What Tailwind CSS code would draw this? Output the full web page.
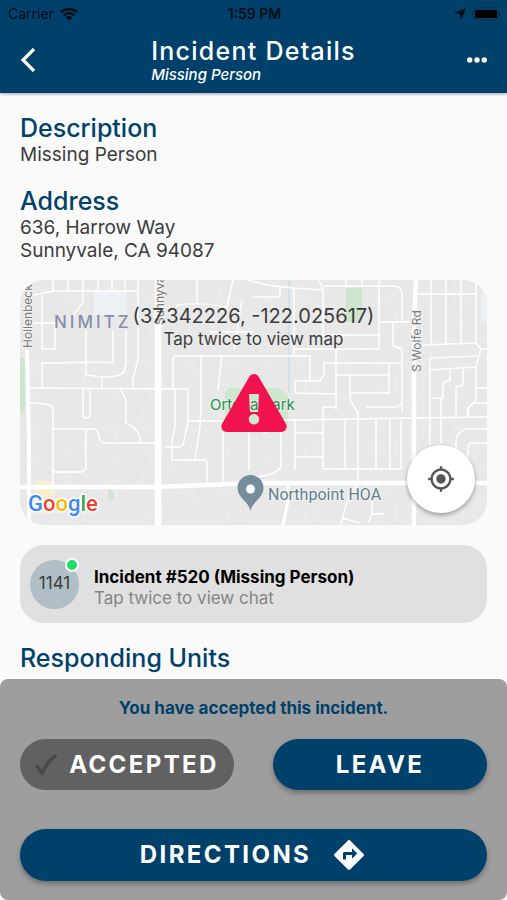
<!DOCTYPE html>
<html lang="en">

<head>
    <meta charset="UTF-8">
    <meta name="viewport" content="width=device-width, initial-scale=1.0">
    <title>Incident Details</title>
    <script src="https://cdn.jsdelivr.net/npm/@tailwindcss/browser@4"></script>
</head>

<body class="flex h-screen flex-col bg-[#fafafa] font-['Inter',sans-serif] text-[#3c3c3c]">
    <header class="z-10 shrink-0 bg-[#00416b] pb-2.5 text-white shadow-[0_1px_3px_rgba(0,0,0,0.35)]">
        <!-- Status bar -->
        <div class="grid h-7 grid-cols-3 items-center pr-1.5 pl-2 text-sm text-[#020d16]">
            <div class="flex items-center gap-1.5">
                <span>Carrier</span>
                <svg class="h-3.5 w-[18px]" viewBox="0 0 18 14" fill="none" stroke="currentColor" stroke-width="2.4">
                    <path d="M1 5.2a11.5 11.5 0 0 1 16 0M3.8 8.4a7.5 7.5 0 0 1 10.4 0" />
                    <path d="M9 13.6L5.8 10.4a4.6 4.6 0 0 1 6.4 0z" fill="currentColor" stroke="none" />
                </svg>
            </div>
            <span class="text-center font-semibold">1:59 PM</span>
            <div class="flex items-center justify-end gap-1.5">
                <svg class="h-3 w-3" viewBox="0 0 12 12" fill="currentColor">
                    <path d="M12 0L7 12 6 6.2 0 5z" />
                </svg>
                <svg class="h-3.5 w-[29px]" viewBox="0 0 29 14">
                    <rect x="1" y="1" width="25" height="12" rx="3" fill="none" stroke="#04304f" />
                    <rect x="3" y="3" width="22" height="8" rx="1" fill="#000" />
                    <path d="M27.5 5v4" stroke="#04304f" stroke-width="1.5" />
                </svg>
            </div>
        </div>

        <div class="grid grid-cols-[1fr_auto_1fr] items-center px-5 pt-2">
            <button aria-label="Back" class="justify-self-start">
                <svg class="h-6 w-4" viewBox="0 0 16 24" fill="none" stroke="currentColor" stroke-width="3.2">
                    <path d="M14 1L3 12l11 11" />
                </svg>
            </button>
            <div>
                <h1 class="text-[25px] leading-[30px] font-medium tracking-wider">Incident Details</h1>
                <p class="text-[15px] leading-[17px] font-medium italic">Missing Person</p>
            </div>
            <button aria-label="More options" class="justify-self-end">
                <svg class="h-6 w-5" viewBox="0 0 20 24" fill="currentColor">
                    <circle cx="2.7" cy="12" r="2.7" />
                    <circle cx="10" cy="12" r="2.7" />
                    <circle cx="17.3" cy="12" r="2.7" />
                </svg>
            </button>
        </div>
    </header>

    <main class="min-h-0 flex-1 overflow-hidden px-5 pt-5">
        <section>
            <h2 class="text-[25px] leading-[30px] font-medium text-[#00416b]">Description</h2>
            <p class="text-[19px] leading-[23px]">Missing Person</p>
        </section>

        <section class="mt-5">
            <h2 class="text-[25px] leading-[30px] font-medium text-[#00416b]">Address</h2>
            <p class="text-[19px] leading-[23px]">636, Harrow Way<br>Sunnyvale, CA 94087</p>
        </section>

        <section class="relative mt-[18px] h-[245px] overflow-hidden rounded-[24px] bg-[#e8e8e8]">
            <svg class="h-full w-full" viewBox="0 0 467 245" preserveAspectRatio="xMidYMid slice" fill="none">
                <defs>
                    <pattern id="parcels" width="78" height="64" patternUnits="userSpaceOnUse">
                        <path d="M6 8h18M6 20h12v14M44 4v16h20M30 40h22v12M8 54h14M64 30v20M70 58h8" stroke="#ededed" />
                    </pattern>
                </defs>
                <rect width="467" height="245" fill="url(#parcels)" />

                <!-- Parks, school and canal -->
                <path d="M74 12h33v23H74z" fill="#edf0f4" />
                <path d="M0 78h5v55H0zM326 8h16v34h-16zM205 112l4-4h50l9 8v32h-63zM88 208l6 4v8h-6z" fill="#cde6cd" />
                <path d="M15 201h20v30l-12 4-8-10z" fill="#f9efce" />
                <path d="M461 12h6v29h-6z" fill="#eef1f4" />
                <path d="M269 0v112" stroke="#c9dfee" stroke-width="1.5" />

                <!-- Side streets -->
                <g stroke="#fff" stroke-width="1.5" stroke-linejoin="round">
                    <path d="M9 15h5l19-4h85M33 0v11M48 0v11M63 0v22L52 37M78 0v11M92 0v11M105 0v11M118 0v80l-5 18v10" />
                    <path d="M22 15v54h13V43H8M66 50v45l16 2q18 0 22-5l2-8V50M93 50v32L22 83v25M82 97v11M8 108l160 1" />
                    <path d="M63 108v27q0 3 3 3t4-3v-27M100 108l6 12v23q14 6 15 20M10 123q20 0 23 5v77M33 149h40q5 0 6 7t6 7h52M66 149v40l-4 3H33" />
                    <path d="M153 109V78l2-2h136M155 109v38l-3 13v20h33l2 2v21M145 167h15l3-2 5-23v-33M168 141h35M181 76v50l-1 21-5 33" />
                    <path d="M177 0v25M150 33l8-8q20-3 49 2l6-27M222 20l-8 50M190 52h43M202 76l-4 34M203 152v51M229 152v38" />
                    <path d="M227 0l20 5 26 3 30 2v45h56M274 8v68M233 17h27V5M299 0l4 10M303 6h70q9 0 9 9v27M326 0v6M342 0v6M359 0v69h-84M359 42h36" />
                    <path d="M373 42v24l9 3v63M290 76v25h10l4-6V83h78M316 69v61M316 95h53v18h-39M369 83v12M330 95v25l8 13v70M275 101h15M275 101v12l41 1" />
                    <path d="M396 14h60M411 0v63M426 0v63M441 0v63M456 0v63M403 65l53-2 5 6-5 18-46 3V78l48-2M461 69h6M456 87v33l-8 8v9M456 108h11" />
                    <path d="M410 90v75M430 90v10l-7 3v15h-10M443 89v16l-7 2v30M421 118v45M448 137v-8l5-6h14M467 149h-21q-9 3-10 11v12M467 163h-17l-2 4v38" />
                    <path d="M255 140h20l118-2 74-1M275 140v49M303 140v49M325 140v49M356 140v49M370 140v49M381 140v49M303 189h79M275 153h28M275 177h28" />
                    <path d="M303 140v-13h13M346 127h32l4-4M243 153l18-4v38q-6 9-28 10M338 203q-12 14-17 42M322 238l18 5M348 243l4-9h12M352 234v-12" />
                </g>

                <!-- Main roads -->
                <g stroke="#fff">
                    <path d="M7 70l2 90v85" stroke-width="4" />
                    <path d="M138 0v245" stroke-width="6.5" />
                    <path d="M396 0l-2 40v205" stroke-width="4.5" />
                    <path d="M0 207h138l100-4h229" stroke-width="4.5" />
                    <path d="M268 205v16l-5 24" stroke-width="3" />
                </g>

                <g font-family="Inter, sans-serif" stroke-linejoin="round" paint-order="stroke">
                    <g fill="#7a7d80" stroke="#f2f2f2" stroke-width="2" font-size="12">
                        <text transform="translate(12 68) rotate(-90)">Hollenbeck</text>
                        <text transform="translate(144 45) rotate(-90)">Sunnyvale</text>
                        <text transform="translate(401 92) rotate(-90)">S Wolfe Rd</text>
                    </g>
                    <text x="34" y="48" fill="#8490ac" font-size="17" font-weight="500" class="tracking-[3px]">NIMITZ</text>
                    <text x="190" y="130" fill="#2f8a50" stroke="#e6f1e6" stroke-width="2" font-size="15">Ortega Park</text>
                    <text x="248" y="220" fill="#647f8c" stroke="#f2f4f5" stroke-width="2" font-family="Roboto, sans-serif" font-size="16">Northpoint HOA</text>
                </g>

                <path d="M230.5 231c-2-10-13-13-13-23a13 13 0 0 1 26 0c0 10-11 13-13 23z" fill="#748f9b" />
                <circle cx="230.5" cy="209" r="4.5" fill="#fff" />

                <text x="8" y="231" font-family="Roboto, sans-serif" font-size="22" font-weight="500" stroke="#fff" stroke-width="3" stroke-linejoin="round" paint-order="stroke"><tspan fill="#4285f4">G</tspan><tspan fill="#ea4335">o</tspan><tspan fill="#fbbc05">o</tspan><tspan fill="#4285f4">g</tspan><tspan fill="#34a853">l</tspan><tspan fill="#ea4335">e</tspan></text>
            </svg>

            <div class="absolute inset-x-0 top-6 text-center">
                <p class="text-xl leading-[25px]">(37.342226, -122.025617)</p>
                <p class="text-[17px] leading-[21px]">Tap twice to view map</p>
            </div>
            <svg class="absolute top-[94px] left-1/2 h-[58px] w-[66px] -translate-x-1/2" viewBox="0 0 576 512" fill="#f0134d">
                <path d="M569.517 440.013C587.975 472.007 564.806 512 527.94 512H48.054c-36.937 0-59.999-40.055-41.577-71.987L246.423 23.985c18.467-32.009 64.72-31.951 83.154 0l239.94 416.028zM288 354c-25.405 0-46 20.595-46 46s20.595 46 46 46 46-20.595 46-46-20.595-46-46-46zm-43.673-165.346l7.418 136c.347 6.364 5.609 11.346 11.982 11.346h48.546c6.373 0 11.635-4.982 11.982-11.346l7.418-136c.375-6.874-5.098-12.654-11.982-12.654h-63.383c-6.884 0-12.356 5.78-11.981 12.654z" />
            </svg>
            <button aria-label="Center map" class="absolute right-3 bottom-3 flex size-[68px] items-center justify-center rounded-full bg-white text-[#555] shadow-[0_2px_4px_rgba(0,0,0,0.35)]">
                <svg class="size-7" viewBox="0 0 24 24" fill="currentColor">
                    <path d="M12 8c-2.21 0-4 1.79-4 4s1.79 4 4 4 4-1.79 4-4-1.79-4-4-4zm8.94 3c-.46-4.17-3.77-7.48-7.94-7.94V1h-2v2.06C6.83 3.52 3.52 6.83 3.06 11H1v2h2.06c.46 4.17 3.77 7.48 7.94 7.94V23h2v-2.06c4.17-.46 7.48-3.77 7.94-7.94H23v-2h-2.06zM12 19c-3.87 0-7-3.13-7-7s3.13-7 7-7 7 3.13 7 7-3.13 7-7 7z" />
                </svg>
            </button>
        </section>

        <button class="mt-5 flex h-[78px] w-full items-center gap-[15px] rounded-[24px] bg-[#e0e0e0] px-2.5 text-left text-[17px]">
            <span class="relative flex size-[49px] items-center justify-center rounded-full bg-[#b0bec5]">
                1141
                <span class="absolute -top-0.5 right-0 size-3.5 rounded-full border-2 border-white bg-[#1fdc6b]"></span>
            </span>
            <span class="flex flex-col pt-2 leading-[21px]">
                <span class="font-bold text-black">Incident #520 (Missing Person)</span>
                <span class="text-[#858585]">Tap twice to view chat</span>
            </span>
        </button>

        <h2 class="mt-5 text-[25px] leading-[30px] font-medium text-[#00416b]">Responding Units</h2>
    </main>

    <footer class="shrink-0 rounded-lg bg-[#9e9e9e] px-5 pt-[18px] pb-[19px] text-white">
        <p class="text-center text-[17px] leading-[22px] font-bold text-[#00416b]">You have accepted this incident.</p>
        <div class="mt-5 grid grid-cols-2 gap-[39px] text-2xl font-bold tracking-widest">
            <button class="flex h-[51px] items-center justify-center gap-3 rounded-full bg-[#616161]">
                <svg class="h-[22px] w-[22px]" viewBox="0 0 22 22" fill="none" stroke="#484848" stroke-width="3.5" stroke-linecap="round" stroke-linejoin="round">
                    <path d="M2 12.500q3 2 5 7Q12 8 20 2" />
                </svg>
                ACCEPTED
            </button>
            <button class="h-[51px] rounded-full bg-[#00416b] shadow-[0_3px_5px_rgba(0,0,0,0.3)]">LEAVE</button>
            <button class="col-span-2 flex h-[52px] items-center justify-center gap-5 rounded-full bg-[#00416b] shadow-[0_3px_5px_rgba(0,0,0,0.3)]">
                DIRECTIONS
                <svg class="size-9" viewBox="0 0 24 24" fill="currentColor">
                    <path d="M21.71 11.29l-9-9c-.39-.39-1.02-.39-1.41 0l-9 9c-.39.39-.39 1.02 0 1.41l9 9c.39.39 1.02.39 1.41 0l9-9c.39-.38.39-1.01 0-1.41zM14 14.5V12h-4v3H8v-4c0-.55.45-1 1-1h5V7.5l3.5 3.5-3.5 3.5z" />
                </svg>
            </button>
        </div>
    </footer>
</body>

</html>
